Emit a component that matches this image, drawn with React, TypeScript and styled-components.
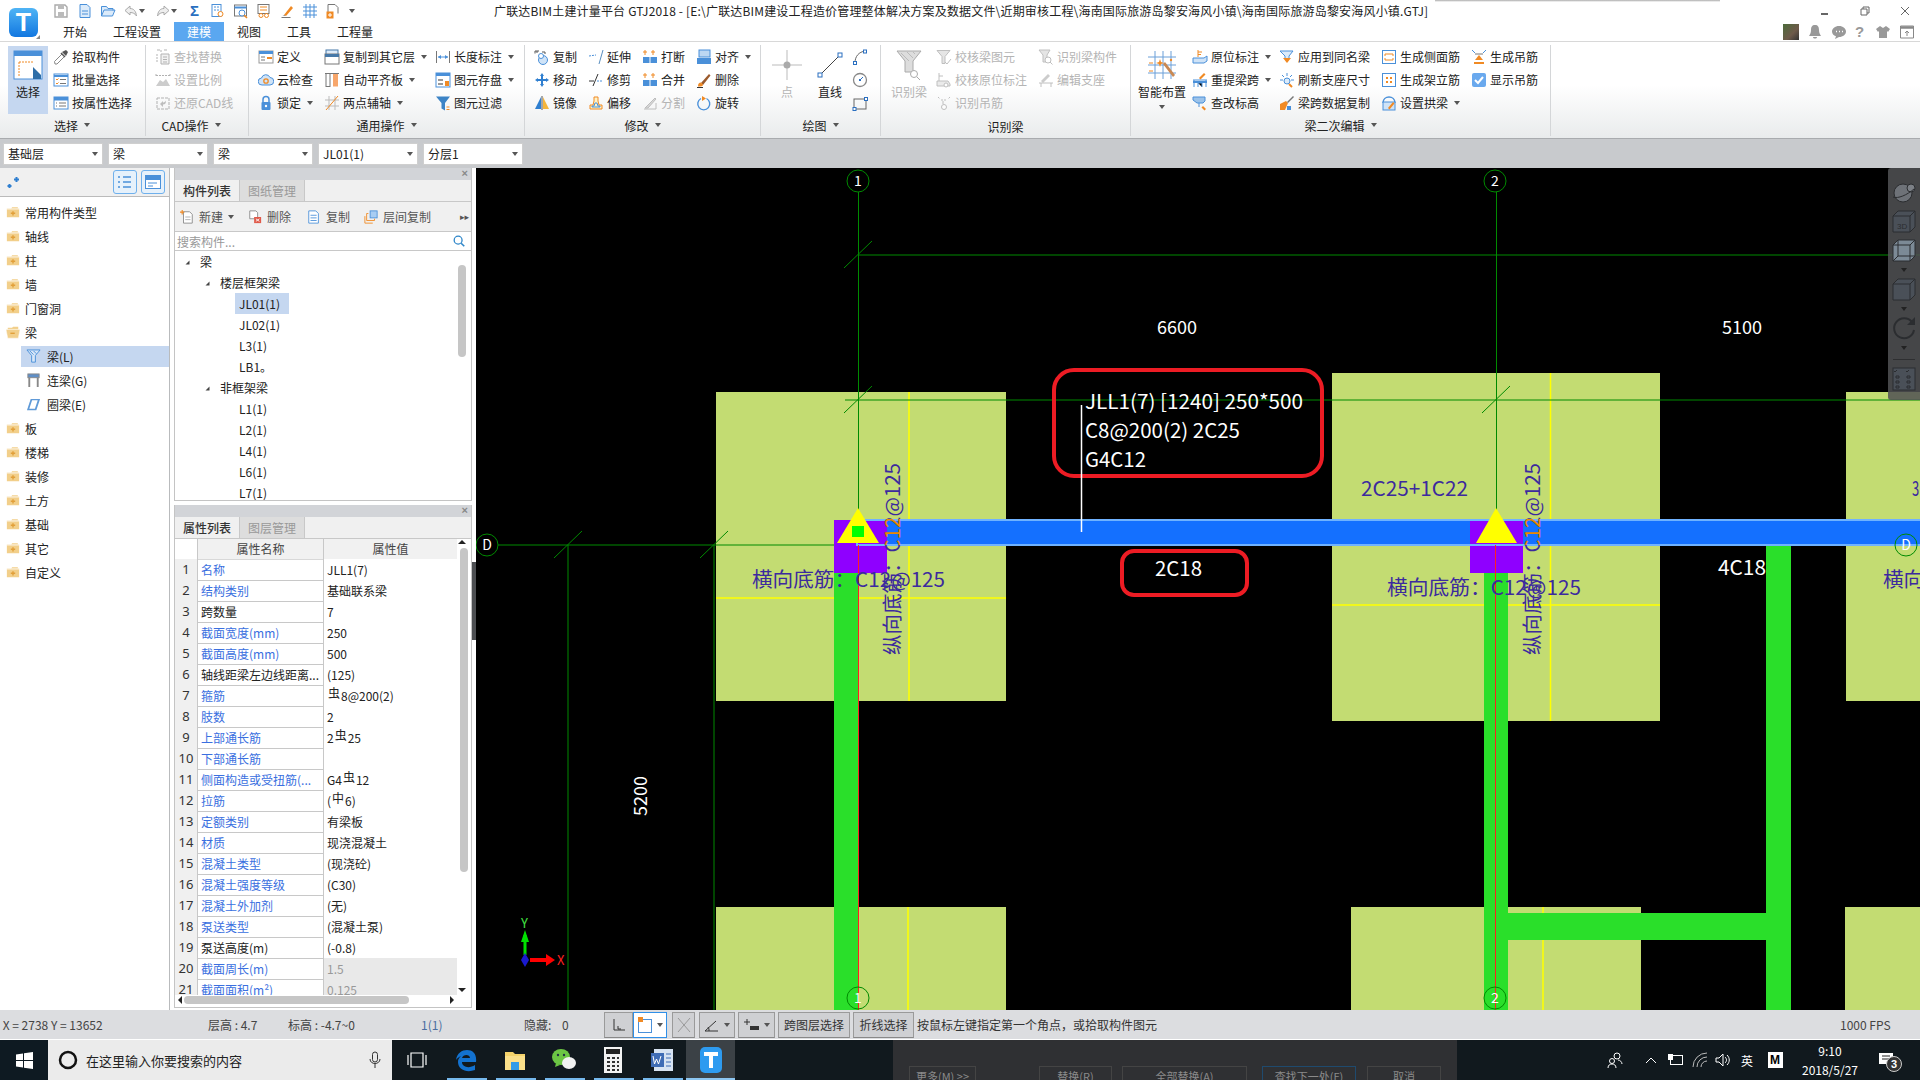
import React, { ReactNode } from "react";
import styled, { createGlobalStyle } from "styled-components";

const Global = createGlobalStyle`
  html, body { margin: 0; padding: 0; background: #000; }
  * { box-sizing: border-box; }
  #root { width: 1920px; height: 1080px; overflow: hidden; }
`;

const B = "#4a90d9";
const O = "#f08a24";
const G = "#777";
const paths: Record<string, ReactNode> = {
  save: <><path d="M2 2h10l2 2v10H2z" fill="none" stroke="#aaa" strokeWidth="1.4" /><path d="M5 2h6v4H5zM5 9h6v5H5z" fill="#bbb" /></>,
  doc: <><path d="M3 1.5h7l3 3v10H3z" fill="#dcebfa" stroke={B} /><path d="M5 8h6M5 11h6" stroke={B} /></>,
  open: <path d="M1.5 13V3.5h5l1.5 2h5v2M1.5 13l2.5-6h11l-2.5 6z" fill="#dcebfa" stroke={B} />,
  undo: <path d="M7 3L2 7.5 7 12V9.5c3 0 5 1 6.5 3.5C13 8.5 11 5.5 7 5.5z" fill="#eee" stroke="#aaa" />,
  redo: <path d="M9 3l5 4.5L9 12V9.5c-3 0-5 1-6.5 3.5C3 8.5 5 5.5 9 5.5z" fill="#eee" stroke="#aaa" />,
  q1: <><rect x="2" y="1.5" width="9" height="12" fill="#fff" stroke={B} /><path d="M4 4h2M7 4h2M4 7h2M7 7h2" stroke={B} /><circle cx="10.5" cy="11" r="2.5" fill="#fff" stroke={O} /></>,
  q2: <><rect x="1.5" y="2" width="12" height="11" fill="#fff" stroke={G} /><path d="M1.5 4.5h12" stroke={B} strokeWidth="2" /><circle cx="9" cy="10" r="3" fill="#fff" stroke={B} /><path d="M11 12l3 3" stroke={O} strokeWidth="1.5" /></>,
  q3: <><rect x="2" y="1.5" width="11" height="9" fill="#fff" stroke={G} /><path d="M4 4h7M4 7h7" stroke={O} /><circle cx="5" cy="12.5" r="2" fill="none" stroke={O} /><circle cx="10.5" cy="12.5" r="2" fill="none" stroke={O} /></>,
  q4: <><path d="M4 12l7-9 2 2-7 8z" fill={O} /><path d="M1.5 14.5h9" stroke={G} /><path d="M2.5 12.5l2-.5 1 1z" fill={G} /></>,
  q5: <path d="M4 1v14M8 1v14M12 1v14M1 4h14M1 8h14M1 12h14" stroke={B} fill="none" />,
  q6: <><path d="M3 1.5h7l3 3v6M3 1.5v8" fill="#fff" stroke={G} /><rect x="1.5" y="8.5" width="7" height="7" fill={O} /><path d="M5 10v4M3 12h4" stroke="#fff" /></>,
  sel: <><rect x="1" y="1" width="28" height="28" fill="#fff" stroke={B} /><rect x="1" y="1" width="28" height="5" fill={B} /><path d="M6 12h14M6 12v14" stroke={O} strokeDasharray="2 1" fill="none" /><path d="M20 17l8 8v4h-8z" fill="#2f6ea8" /></>,
  pick: <><path d="M2 15l-.5-2.5L9 5l2.500 2.500L4 15z" fill="#fff" stroke="#888" /><path d="M9 3l4-2 2 2-2 4z" fill="#555" /><path d="M8 4l4 4" stroke="#555" strokeWidth="1.500" /></>,
  batch: <><rect x="1" y="2" width="14" height="12" fill="#fff" stroke={B} /><path d="M1 4h14" stroke={B} strokeWidth="2" /><path d="M3 7l1 1 1.500-1.500M3 11l1 1 1.500-1.500" stroke={O} fill="none" /><path d="M7 7.500h6M7 11.500h6" stroke={G} /></>,
  attr: <><rect x="1" y="2" width="14" height="12" fill="#fff" stroke={B} /><rect x="1" y="2" width="14" height="3.500" fill={B} /><path d="M3 8h1M3 11h1M6 8h7M6 11h7" stroke={G} /></>,
  find: <><path d="M2 1h3M6 1v2M9 1h3" stroke="#999" /><path d="M6 5h8v10H6z" fill="#eee" stroke="#999" /><path d="M8 8h4M8 10.500h4M8 13h4" stroke="#999" /><path d="M2 5v9" stroke="#999" strokeDasharray="2 1" /></>,
  scale: <><path d="M1 2v3M15 2v3M1 3.500h14" stroke="#999" strokeDasharray="2 1" /><path d="M1 14l4-6 3 2 3-3 4 7z" fill="#bbb" /></>,
  restore: <><rect x="2" y="3" width="12" height="11" fill="none" stroke="#999" strokeDasharray="3 1" /><path d="M5 9l3 3V9.500c2 0 3-1 3-4-1 1.500-2 2-3 2V6z" fill="#aaa" /></>,
  define: <><rect x="1" y="2" width="14" height="12" fill="#fff" stroke="#999" /><rect x="1" y="2" width="14" height="3" fill={B} /><path d="M3 8h4M3 11h4" stroke={G} /><rect x="9" y="8" width="5" height="2" fill={O} /></>,
  cloud: <><path d="M4 13a3.500 3.500 0 0 1-.5-7A4.500 4.500 0 0 1 12 5.500a3.700 3.700 0 0 1 0 7.500z" fill="#cfe3f7" stroke={B} /><circle cx="8" cy="9" r="2.200" fill="none" stroke={O} strokeWidth="1.300" /></>,
  lock: <><path d="M5 7V4.500a3 3 0 0 1 6 0V7" fill="none" stroke={B} strokeWidth="1.500" /><rect x="3.500" y="7" width="9" height="8" rx="1" fill={B} /><circle cx="8" cy="11" r="1.200" fill="#fff" /></>,
  copyf: <><rect x="2" y="1" width="12" height="6" fill="#dcebfa" stroke="#4678a8" /><rect x="1" y="5" width="14" height="10" fill="#fff" stroke={G} /><rect x="1" y="5" width="14" height="3" fill="#4678a8" /></>,
  flush: <><rect x="2" y="1.500" width="4" height="13" fill="#fff" stroke={G} /><rect x="9" y="1.500" width="5" height="13" fill="#f7a66b" /><path d="M1 1.500h14" stroke={G} /></>,
  two: <><path d="M1 5h14M1 11h14M5 1v14M11 1v14" stroke="#bbb" /><path d="M2 15L14 1" stroke={O} /></>,
  len: <><path d="M1.500 2v12M14.500 2v12" stroke={G} /><path d="M3 8h10" stroke={B} /><path d="M3 8l3-2v4zM13 8l-3-2v4z" fill={B} /></>,
  store: <><rect x="1" y="1" width="14" height="14" fill="#fff" stroke={B} /><rect x="1" y="1" width="14" height="3" fill={B} /><rect x="3" y="7" width="5" height="2" fill="#999" /><rect x="3" y="11" width="5" height="2" fill="#999" /><rect x="10" y="9" width="4" height="5" fill={O} /></>,
  filter: <><path d="M1 1.500h14L10 8v7.500L6.500 13.500V8z" fill="#3d84c6" /><path d="M11.500 12h3M11.500 14.500h3" stroke={O} /></>,
  copy: <><path d="M2 3h2M8 3h3v2M1 4.500V2h4" stroke="#555" fill="none" /><circle cx="9" cy="11" r="4.500" fill="#cfe3f7" stroke={B} /><circle cx="7" cy="7" r="2.500" fill="#fff" stroke={B} /></>,
  move: <path d="M8 1l2 3H9v3h3V6l3 2-3 2V9H9v3h1l-2 3-2-3h1V9H4v1L1 8l3-2v1h3V4H6z" fill="#2f7fd0" />,
  mirror: <><path d="M7 2v12H1z" fill="#2f7fd0" /><path d="M9 2v12h6z" fill="#f5b53b" /><path d="M8 1v14" stroke="#555" /></>,
  extend: <><path d="M1 7l7-1" stroke={B} strokeDasharray="2 1" /><path d="M15 1l-4 14" stroke="#5a8fc0" /></>,
  trim: <><path d="M1 9h5" stroke="#333" /><path d="M9 9h6" stroke={B} strokeDasharray="2 1" /><path d="M10 2L5 14" stroke="#333" /></>,
  offset: <><path d="M2 14v-4h3l1-4V2h4v4l1 4h3v4z" fill="#fff3c7" stroke={O} /><path d="M4 12v-1h2l1-3h2l1 3h2v1z" fill="none" stroke={B} /></>,
  brk: <><path d="M3 1v5M1 3h4M11 1v5M9 3h4" stroke={O} /><rect x="1" y="8" width="6.500" height="6" fill={B} /><rect x="8.500" y="8" width="6.500" height="6" fill={B} /></>,
  split: <><path d="M2 14h12V8" stroke="#aaa" fill="none" /><path d="M3 13L13 3l1 1-8 9z" fill="#ccc" stroke="#aaa" /></>,
  align: <><rect x="3" y="1" width="11" height="7" fill="#bcd7f2" stroke={B} /><rect x="1" y="9" width="14" height="6" fill={B} /></>,
  del: <><path d="M5 11L13 2l1.500 1.500L7 13z" fill="#9b5a2c" /><path d="M2 14.500c0-3 1-4 3-4l2 2c0 2-2 2-5 2z" fill={O} /><path d="M1 15.500h6" stroke="#333" /></>,
  rot: <><path d="M10.500 3.500A6 6 0 1 1 5 3.500" fill="none" stroke={B} strokeWidth="1.400" /><path d="M6 1l4 2.500L6 6z" fill={O} /></>,
  point: <><path d="M15 0v30M0 15h30" stroke="#bbb" /><circle cx="15" cy="15" r="3.500" fill="#aaa" /></>,
  line: <><path d="M5 25L25 5" stroke="#444" /><rect x="3" y="23" width="4" height="4" fill="#fff" stroke="#2a6fc0" /><rect x="23" y="3" width="4" height="4" fill="#fff" stroke="#2a6fc0" /></>,
  arc: <><path d="M3 14C3 7 7 3 13 2" stroke="#666" fill="none" /><rect x="1.500" y="12.500" width="3" height="3" fill="#fff" stroke="#2a6fc0" /><rect x="11.500" y="1" width="3" height="3" fill="#fff" stroke="#2a6fc0" /></>,
  circ: <><circle cx="8" cy="8" r="6.500" fill="#fff" stroke="#888" strokeWidth="1.300" /><path d="M8 8l3-3" stroke="#2a6fc0" /><rect x="7" y="7" width="2" height="2" fill="#2a6fc0" /></>,
  rect: <><rect x="2" y="4" width="12" height="10" fill="none" stroke="#666" /><rect x="1" y="12.500" width="3" height="3" fill="#fff" stroke="#2a6fc0" /><rect x="12.500" y="2.500" width="3" height="3" fill="#fff" stroke="#2a6fc0" /></>,
  rbeam: <><path d="M3 1h24l-8 10v11h-8V11z" fill="#ddd" stroke="#aaa" /><path d="M7 3l8 8M13 2l6 6M19 2l2 2" stroke="#bbb" /><circle cx="20" cy="24" r="3.500" fill="#fff" stroke="#aaa" /><path d="M23 27l3 3" stroke="#aaa" /></>,
  ck1: <><path d="M1 1.500h13l-5 6v7H6v-7z" fill="#ddd" stroke="#aaa" /><path d="M9 13l2 2 4-5" fill="none" stroke="#aaa" /></>,
  ck2: <><path d="M3 1v8M3 4h4" stroke="#aaa" /><path d="M1 9h11l2 3v2H1z" fill="#e4e4e4" stroke="#aaa" /><circle cx="10" cy="13" r="2" fill="#fff" stroke="#aaa" /></>,
  hang: <><path d="M2 2l2 2M14 2l-2 2M5 5h6" stroke="#aaa" strokeDasharray="2 1" /><path d="M7 6v3" stroke="#aaa" /><circle cx="8" cy="12" r="2.500" fill="#fff" stroke="#aaa" /></>,
  ck3: <><path d="M1 1h11l-3 5v7H5V6z" fill="#ddd" stroke="#aaa" /><circle cx="10" cy="11" r="3" fill="#fff" stroke="#aaa" /><path d="M12 13l2.500 2.500" stroke="#aaa" /></>,
  edit: <><path d="M3 9l7-7 2 2-7 7z" fill="#bbb" /><path d="M1 11h14M3 11v4M13 11v4" stroke="#aaa" /></>,
  smart: <><path d="M8 1v28M16 1v28M24 1v28M1 7h28M1 15h28M1 23h28" stroke="#6a9fd8" /><path d="M2 13h4M2 21h4" stroke={O} /><path d="M16 14l10 13 2-2L18 12z" fill="#c98852" /><path d="M13 9l1 3 3 1-3 1-1 3-1-3-3-1 3-1z" fill={O} /><circle cx="24" cy="10" r="1.200" fill={O} /></>,
  orig: <><path d="M6 1v7M6 3h4M6 5.500h3" stroke={O} /><path d="M1 9h11l3-2v5l-3 2H1z" fill="#cfe3f7" stroke={B} /></>,
  lift: <><path d="M1 8h14M2 8v7M14 8v7M6 11h4v4M6 15v-4" stroke={B} /><path d="M1 10h14" stroke={B} strokeWidth="2" /><path d="M7 6l5-5 1.500 1.500-5 5z" fill={O} /></>,
  elev: <><path d="M1 2h12v4l-2 2H5L1 5z" fill="#9cc3ea" stroke={B} /><path d="M7 8v4" stroke={B} /><path d="M11 11l3 3-1.500 1.500-3-3z" fill={O} /></>,
  same: <><path d="M1 2h13l-4 5v3H6V7z" fill="#dcebfa" stroke={B} /><path d="M4 9h8l-4 5z" fill={O} /></>,
  fresh: <><path d="M8 1v3M3 3l2 2M13 3l-2 2M1 8h3M15 8h-3" stroke={B} /><circle cx="8" cy="9" r="3" fill="#dcebfa" stroke={B} /><path d="M10 12l3 3" stroke={O} strokeWidth="2" /></>,
  data: <><path d="M1 15V9l6-3 2 2-3 7z" fill={O} /><path d="M8 7l6-6 1 1-6 6z" fill="#777" /><path d="M8 15V11h4v4" fill={B} /></>,
  side: <><rect x="1.500" y="1.500" width="13" height="13" fill="#fff" stroke={B} /><path d="M4 5h8M4 11h8M4 5v2M12 5v2M4 9v2M12 9v2" stroke={O} /></>,
  erect: <><rect x="1.500" y="1.500" width="13" height="13" fill="#fff" stroke={B} /><rect x="5" y="5" width="2" height="2" fill={O} /><rect x="9" y="5" width="2" height="2" fill={O} /><rect x="5" y="9" width="2" height="2" fill={O} /><rect x="9" y="9" width="2" height="2" fill={O} /></>,
  arch: <><path d="M2 8c0-8 12-8 12 0" fill="none" stroke={B} strokeWidth="1.500" /><rect x="2" y="7" width="12" height="8" fill="#cfe3f7" stroke={B} /><path d="M7 13l5-6 1.500 1.500-5 6z" fill={O} /></>,
  hgen: <><path d="M1 1l3 3M15 1l-3 3" stroke={B} /><path d="M4 5h8" stroke={G} /><path d="M8 6l4 5H4z" fill={O} /><path d="M3 14h10" stroke={O} strokeWidth="2" /></>,
  check: <><rect x="1" y="1" width="14" height="14" rx="2" fill="#6aa9ee" /><path d="M4 8l3 3 5-6" fill="none" stroke="#fff" strokeWidth="2" /></>,
  fold: <><path d="M1 4h5l1-1.500h6.500V4H15v10H1z" fill="#f2cf8a" /><path d="M1 4.500h14" stroke="#fff" /><path d="M8 7v5M5.500 9.500h5" stroke="#e2a03a" strokeWidth="1.600" /></>,
  foldo: <><path d="M2 3h5l1-1h6v3H2z" fill="#f2cf8a" /><path d="M0 5h16l-2 10H2z" fill="#f2cf8a" stroke="#fff" strokeWidth=".5" /><path d="M5 9.500h5" stroke="#e2a03a" strokeWidth="1.600" /></>,
  nbeam: <><path d="M1 1h14l-5 6v7H6V7z" fill="#d6e6f8" stroke={B} /><path d="M4 2l4 4M8 2l3 3" stroke={B} /></>,
  conn: <><rect x="2" y="1" width="12" height="4" fill="#5f8fc7" stroke="#888" /><path d="M3.500 5v10M12.500 5v10" stroke="#888" strokeWidth="2" fill="none" /></>,
  ring: <path d="M5 2h10l-4 12H1zM6.500 3.500l-3 9h6l3-9z" fill="#5f9ad8" />,
  newf: <><path d="M4 2h7l3 3v10H4z" fill="#fff" stroke="#888" /><path d="M6 8h6M6 11h6" stroke="#aaa" /><path d="M2.500 0v5M0 2.500h5" stroke={O} strokeWidth="1.300" /></>,
  delf: <><path d="M2 1h7l2 2v7H2z" fill="#fff" stroke="#888" /><rect x="7" y="8" width="8" height="7" fill="#e05a4a" /><path d="M9 10l4 3M13 10l-4 3" stroke="#fff" /></>,
  copyd: <><path d="M2 1h8l3 3v11H2z" fill="#fff" stroke={B} /><path d="M4 6h7M4 9h7M4 12h7" stroke={B} /></>,
  floor: <><rect x="7" y="1" width="8" height="8" fill="#a8cdf3" stroke={B} /><path d="M5 4H3v8h9v-2M1 7v8h9" fill="none" stroke={O} /></>,
  tree: <path d="M1 13l8-8v8z" fill="#444" />,
  search: <><circle cx="7" cy="7" r="4.500" fill="none" stroke="#2e86c9" strokeWidth="1.500" /><path d="M10.500 10.500l3.500 3.500" stroke="#2e86c9" strokeWidth="1.800" /></>,
};

const Sv = styled.svg<{ $off?: boolean }>`
  flex: none;
  display: block;
  ${(p) => (p.$off ? "filter: grayscale(1); opacity: .75;" : "")}
`;
const Glyph = ({ name, size = 16, box = 16, off }: { name: string; size?: number; box?: number; off?: boolean }) => (
  <Sv width={size} height={size} viewBox={`0 0 ${box} ${box}`} $off={off}>{paths[name]}</Sv>
);

const Root = styled.div`
  width: 1920px;
  height: 1080px;
  display: flex;
  flex-direction: column;
  position: relative;
  overflow: hidden;
  font-family: "Noto Sans CJK SC", "Noto Sans", sans-serif;
  font-size: 12px;
  color: #222;
  background: #fff;
`;
const TopShadow = styled.div`
  position: absolute;
  left: 1435px;
  top: 0;
  width: 285px;
  height: 2px;
  background: linear-gradient(#aaa, #fff);
`;
const Head = styled.header`
  height: 42px;
  display: flex;
  background: #fff;
  border-bottom: 1px solid #d8d8d8;
  flex: none;
`;
const LogoZone = styled.div`
  width: 46px;
  padding: 8px 0 0 9px;
  flex: none;
  position: relative;
  &::after {
    content: "";
    position: absolute;
    left: 36px;
    top: 35px;
    border-left: 4px solid transparent;
    border-bottom: 4px solid #888;
  }
`;
const Logo = styled.div`
  width: 29px;
  height: 29px;
  border-radius: 6px;
  background: linear-gradient(#4fb4f5, #1277e0);
  color: #fff;
  font: bold 25px/29px "Liberation Sans", sans-serif;
  text-align: center;
`;
const HeadCol = styled.div`
  flex: 1;
  display: flex;
  flex-direction: column;
`;
const TitleRow = styled.div`
  height: 22px;
  display: flex;
  align-items: center;
  padding-left: 7px;
`;
const Qat = styled.div`
  width: 441px;
  display: flex;
  align-items: center;
  flex: none;
`;
const QatItem = styled.span<{ $w: number }>`
  width: ${(p) => p.$w}px;
  flex: none;
  display: flex;
  align-items: center;
  justify-content: flex-start;
  font: bold 15px/16px "Liberation Sans", sans-serif;
  color: #2a6fc0;
`;
const Title = styled.div`
  flex: 1;
  white-space: nowrap;
  font-size: 12px;
  line-height: 22px;
  letter-spacing: 0.18px;
`;
const WinCtl = styled.div`
  width: 100px;
  display: flex;
  align-items: center;
  justify-content: space-between;
  padding-right: 10px;
  color: #666;
`;
const TabRow = styled.div`
  height: 19px;
  display: flex;
  align-items: flex-end;
  padding-left: 4px;
`;
const Tab = styled.div<{ $w: number; $on?: boolean }>`
  width: ${(p) => p.$w}px;
  height: 19px;
  line-height: 19px;
  text-align: center;
  color: ${(p) => (p.$on ? "#fff" : "#222")};
  background: ${(p) => (p.$on ? "#5aa7f0" : "transparent")};
`;
const HeadRight = styled.div`
  margin-left: auto;
  display: flex;
  align-items: center;
  height: 19px;
  gap: 8px;
  padding-right: 5px;
`;
const Avatar = styled.div`
  width: 16px;
  height: 16px;
  background: linear-gradient(135deg, #4c6b3a, #6e5a4a 60%, #333);
`;
const Help = styled.span`
  font: bold 15px "Liberation Sans", sans-serif;
  color: #999;
  width: 12px;
`;

const Ribbon = styled.div`
  height: 97px;
  display: flex;
  padding: 3px 0 2px;
  background: linear-gradient(#fff 45%, #e9ebec);
  border-bottom: 1px solid #a9abae;
  flex: none;
`;
const Group = styled.section<{ $w: number }>`
  width: ${(p) => p.$w}px;
  border-right: 1px solid #d4d6d8;
  display: flex;
  flex-direction: column;
  flex: none;
`;
const GroupBody = styled.div<{ $pad: number }>`
  height: 70px;
  display: flex;
  padding-left: ${(p) => p.$pad}px;
`;
const GroupLabel = styled.div<{ $shift?: number; $low?: boolean }>`
  height: 22px;
  display: flex;
  align-items: center;
  justify-content: center;
  gap: 6px;
  padding-right: ${(p) => p.$shift || 0}px;
  padding-top: ${(p) => (p.$low ? 3 : 0)}px;
`;
const Caret = styled.i`
  display: inline-block;
  flex: none;
  width: 0;
  height: 0;
  border-left: 3.5px solid transparent;
  border-right: 3.5px solid transparent;
  border-top: 4px solid #555;
`;
const Col = styled.div<{ $w?: number; $m?: number }>`
  width: ${(p) => (p.$w ? `${p.$w}px` : "auto")};
  margin-left: ${(p) => p.$m || 0}px;
  flex: none;
  display: flex;
  flex-direction: column;
`;
const ToolRow = styled.div<{ $off?: boolean }>`
  height: 23px;
  display: flex;
  align-items: center;
  white-space: nowrap;
  color: ${(p) => (p.$off ? "#b4b4b4" : "#222")};
`;
const ToolIconBox = styled.span`
  width: 19px;
  flex: none;
`;
const ToolCaret = styled(Caret)`
  margin-left: 6px;
`;
const Big = styled.div<{ $w: number; $on?: boolean; $off?: boolean }>`
  width: ${(p) => p.$w}px;
  height: 68px;
  flex: none;
  display: flex;
  flex-direction: column;
  align-items: center;
  line-height: 18px;
  background: ${(p) => (p.$on ? "#c5d7f0" : "transparent")};
  color: ${(p) => (p.$off ? "#b4b4b4" : "#222")};
  margin-top: 1px;
  white-space: nowrap;
`;
const BigIcon = styled.div`
  height: 37px;
  display: flex;
  align-items: center;
`;
const BigCaret = styled.div`
  margin-top: 3px;
  line-height: 0;
`;
const DrawSmall = styled.div`
  display: flex;
  flex-direction: column;
  padding-left: 2px;
`;
const DrawCell = styled.div`
  height: 23px;
  display: flex;
  align-items: center;
`;

const Tool = ({ i, t, off, c }: { i: string; t: string; off?: boolean; c?: boolean }) => (
  <ToolRow $off={off}>
    <ToolIconBox><Glyph name={i} size={16} off={off} /></ToolIconBox>
    {t}
    {c && <ToolCaret />}
  </ToolRow>
);

const ComboBar = styled.div`
  height: 29px;
  background: #c8cacd;
  display: flex;
  align-items: center;
  gap: 5px;
  padding-left: 3px;
  flex: none;
`;
const Combo = styled.div`
  width: 100px;
  height: 22px;
  background: #fff;
  border: 1px solid #cfcfcf;
  display: flex;
  align-items: center;
  justify-content: space-between;
  padding: 0 4px;
`;

const Main = styled.main`
  height: 842px;
  display: flex;
  flex: none;
  background: #fff;
  position: relative;
`;
const Nav = styled.nav`
  width: 170px;
  border-right: 1px solid #b9bbbd;
  flex: none;
`;
const NavTop = styled.div`
  height: 29px;
  background: #f0f0f0;
  border-bottom: 1px solid #bbb;
  display: flex;
  align-items: center;
  padding: 0 4px 0 7px;
  gap: 4px;
`;
const NavBtn = styled.div`
  width: 24px;
  height: 24px;
  border: 1px solid #6fb0ec;
  border-radius: 3px;
  background: #e6f1fb;
  display: flex;
  align-items: center;
  justify-content: center;
`;
const NavSpacer = styled.div`
  flex: 1;
  line-height: 0;
`;
const NavList = styled.div`
  padding-top: 3px;
`;
const NavRow = styled.div<{ $sub?: boolean; $on?: boolean }>`
  height: 24px;
  display: flex;
  align-items: center;
  gap: ${(p) => (p.$sub ? 6 : 5)}px;
  margin-left: ${(p) => (p.$sub ? 21 : 0)}px;
  padding-left: ${(p) => (p.$sub ? 5 : 6)}px;
  position: relative;
  background: ${(p) => (p.$on ? "linear-gradient(transparent 2px, #c5d7f0 2px, #c5d7f0 23px, transparent 23px)" : "none")};
`;

const Mid = styled.div`
  width: 298px;
  margin-left: 4px;
  display: flex;
  flex-direction: column;
  gap: 4px;
  flex: none;
`;
const Pane = styled.section<{ $h: number }>`
  height: ${(p) => p.$h}px;
  border: 1px solid #c4c4c4;
  border-top: none;
  display: flex;
  flex-direction: column;
  overflow: hidden;
  flex: none;
  position: relative;
`;
const PaneTitle = styled.div`
  height: 12px;
  background: #d2d4d8;
  color: #888;
  font: bold 11px/11px "Liberation Sans", sans-serif;
  text-align: right;
  padding-right: 3px;
  flex: none;
`;
const PaneTabs = styled.div`
  height: 22px;
  background: #f0f0f0;
  display: flex;
  border-bottom: 1px solid #c8c8c8;
  flex: none;
`;
const PaneTab = styled.div<{ $on?: boolean }>`
  width: 65px;
  text-align: center;
  line-height: 21px;
  font-weight: ${(p) => (p.$on ? 500 : 400)};
  color: ${(p) => (p.$on ? "#333" : "#999")};
  background: ${(p) => (p.$on ? "#f0f0f0" : "#dddddd")};
  border-right: 1px solid #c8c8c8;
`;
const PaneTools = styled.div`
  height: 30px;
  background: #f0f0f0;
  border-bottom: 1px solid #c8c8c8;
  display: flex;
  align-items: center;
  padding-left: 5px;
  color: #555;
  white-space: nowrap;
  flex: none;
`;
const PaneTool = styled.span<{ $w: number }>`
  width: ${(p) => p.$w}px;
  display: flex;
  align-items: center;
  gap: 5px;
  flex: none;
`;
const More = styled.span`
  margin-left: auto;
  padding-right: 2px;
  font: 9px/10px "DejaVu Sans", sans-serif;
  color: #555;
`;
const Search = styled.div`
  height: 19px;
  border-bottom: 1px solid #c8c8c8;
  display: flex;
  align-items: center;
  justify-content: space-between;
  padding: 0 5px 0 2px;
  color: #999;
  flex: none;
`;
const Tree = styled.div`
  flex: 1;
  position: relative;
  overflow: hidden;
`;
const TreeRow = styled.div<{ $lv: number }>`
  height: 21px;
  display: flex;
  align-items: center;
  padding-left: ${(p) => [10, 30, 64][p.$lv]}px;
  gap: 7px;
`;
const TreeLabel = styled.span<{ $on?: boolean }>`
  padding: 0 ${(p) => (p.$on ? 9 : 0)}px 0 4px;
  margin-left: -4px;
  line-height: 21px;
  background: ${(p) => (p.$on ? "#c5d7f0" : "transparent")};
`;
const ScrollThumb = styled.div<{ $l: number; $t: number; $h: number }>`
  position: absolute;
  left: ${(p) => p.$l}px;
  top: ${(p) => p.$t}px;
  width: 8px;
  height: ${(p) => p.$h}px;
  background: #c6c6c6;
  border-radius: 4px;
`;
const Table = styled.div`
  height: 456px;
  width: 282px;
  overflow: hidden;
  flex: none;
`;
const RowGrid = styled.div`
  display: grid;
  grid-template-columns: 22px 126px 134px;
  height: 21px;
  line-height: 21px;
  white-space: nowrap;
`;
const HeadGrid = styled(RowGrid)`
  height: 20px;
  line-height: 20px;
  color: #444;
`;
const HCell = styled.div<{ $first?: boolean }>`
  background: ${(p) => (p.$first ? "#fff" : "#f1f1f1")};
  text-align: center;
  border-bottom: 1px solid #d8d8d8;
  border-left: ${(p) => (p.$first ? "none" : "1px solid #c8c8c8")};
`;
const NumCell = styled.div`
  background: #f0f0f0;
  border-bottom: 1px solid #c8c8c8;
  text-align: center;
  color: #333;
  font: 13px/21px "Noto Sans", sans-serif;
`;
const NameCell = styled.div<{ $blue?: boolean }>`
  border-left: 1px solid #c8c8c8;
  border-bottom: 1px solid #c8c8c8;
  padding-left: 3px;
  color: ${(p) => (p.$blue ? "#3a6fe0" : "#222")};
  overflow: hidden;
`;
const ValueCell = styled.div<{ $gray?: boolean }>`
  border-left: 1px solid #c8c8c8;
  border-bottom: 1px solid #c8c8c8;
  padding-left: 3px;
  color: ${(p) => (p.$gray ? "#999" : "#222")};
  background: ${(p) => (p.$gray ? "#e9e9e9" : "#fff")};
`;
const Rebar = styled.span`
  font-size: 12px;
  position: relative;
  top: -3px;
  padding: 0 1px;
`;
const VArrow = styled.div<{ $t: number; $up?: boolean }>`
  position: absolute;
  top: ${(p) => p.$t}px;
  left: 283px;
  width: 0;
  height: 0;
  border-left: 4px solid transparent;
  border-right: 4px solid transparent;
  ${(p) => (p.$up ? "border-bottom: 4px solid #222;" : "border-top: 4px solid #222;")}
`;
const HBar = styled.div`
  height: 10px;
  display: flex;
  align-items: center;
  width: 282px;
  padding: 0 3px;
  justify-content: space-between;
  position: relative;
  flex: none;
`;
const HThumb = styled.div`
  position: absolute;
  left: 9px;
  width: 225px;
  height: 8px;
  background: #c6c6c6;
  border-radius: 4px;
`;
const HArrow = styled.i<{ $r?: boolean }>`
  width: 0;
  height: 0;
  border-top: 4px solid transparent;
  border-bottom: 4px solid transparent;
  ${(p) => (p.$r ? "border-left: 4px solid #222;" : "border-right: 4px solid #222;")}
`;
const SplitTab = styled.div`
  position: absolute;
  left: 472px;
  top: 394px;
  width: 4px;
  height: 78px;
  background: #4d4f52;
`;

const CanvasBox = styled.div`
  width: 1444px;
  height: 842px;
  margin-left: 4px;
  background: #000;
  position: relative;
  overflow: hidden;
  flex: none;
`;
const ViewBar = styled.div`
  position: absolute;
  right: 0;
  top: 0;
  width: 32px;
  height: 232px;
  background: rgba(80, 82, 84, 0.86);
  border-radius: 3px 0 0 3px;
  display: flex;
  flex-direction: column;
  align-items: center;
  padding-top: 10px;
`;
const ViewCell = styled.div<{ $h: number }>`
  height: ${(p) => p.$h}px;
  display: flex;
  align-items: center;
`;
const ViewCaret = styled.div`
  height: 11px;
  display: flex;
  align-items: center;
`;
const ViewLine = styled.div`
  width: 22px;
  height: 1px;
  background: #2e2f31;
  margin: 6px 0 5px;
`;
const DarkCaret = styled(Caret)`
  border-top-color: #222;
`;

const Status = styled.footer`
  height: 30px;
  background: #dcdde0;
  border-bottom: 1px solid #fff;
  display: flex;
  align-items: center;
  color: #444;
  white-space: nowrap;
  flex: none;
`;
const Stat = styled.span<{ $x: number; $blue?: boolean }>`
  width: ${(p) => p.$x}px;
  flex: none;
  color: ${(p) => (p.$blue ? "#4a6ea0" : "#444")};
`;
const SBtn = styled.div<{ $w: number; $on?: boolean; $m?: number }>`
  width: ${(p) => p.$w}px;
  margin-left: ${(p) => p.$m || 0}px;
  height: 26px;
  flex: none;
  display: flex;
  align-items: center;
  justify-content: center;
  gap: 4px;
  border: 1px solid ${(p) => (p.$on ? "#2f8fe8" : "#9a9a9a")};
  border-bottom-color: ${(p) => (p.$on ? "#2f8fe8" : "#888")};
  background: ${(p) => (p.$on ? "#fff" : "#cfd0d3")};
  color: #333;
`;
const Hint = styled.span`
  margin-left: 3px;
  width: 923px;
  flex: none;
  color: #333;
`;

const Taskbar = styled.div`
  height: 40px;
  background: #11191e;
  display: flex;
  color: #fff;
  flex: none;
`;
const WinBtn = styled.div`
  width: 48px;
  display: flex;
  align-items: center;
  justify-content: center;
  background: #0e1a22;
`;
const SearchBox = styled.div`
  width: 344px;
  background: #ebebeb;
  color: #222;
  display: flex;
  align-items: center;
  font-size: 13px;
  padding: 0 11px 0 10px;
  gap: 8px;
`;
const MicBox = styled.span`
  margin-left: auto;
  line-height: 0;
`;
const TaskIcon = styled.div<{ $line?: boolean; $on?: boolean }>`
  width: 49px;
  position: relative;
  display: flex;
  align-items: center;
  justify-content: center;
  background: ${(p) => (p.$on ? "#3b4146" : "transparent")};
  ${(p) =>
    p.$line
      ? `&::after { content: ""; position: absolute; left: ${p.$on ? 0 : 6}px; right: ${p.$on ? 0 : 3}px; bottom: 0; height: 2px; background: ${p.$on ? "#8cc5f0" : "#76b9ed"}; }`
      : ""}
`;
const Ghost = styled.div`
  margin-left: 158px;
  width: 564px;
  background: #2f3033;
  display: flex;
  padding: 26px 0 0 16px;
  overflow: hidden;
  color: #8a8a8a;
  font-size: 11px;
  flex: none;
`;
const GhostBtn = styled.div<{ $w: number; $m?: number; $on?: boolean }>`
  width: ${(p) => p.$w}px;
  margin-left: ${(p) => p.$m || 0}px;
  height: 30px;
  flex: none;
  border: 1px solid ${(p) => (p.$on ? "#1f4a6e" : "#444")};
  text-align: center;
  line-height: 19px;
  white-space: nowrap;
`;
const Tray = styled.div`
  flex: 1;
  display: flex;
  align-items: center;
  padding-left: 146px;
  font-size: 12px;
`;
const TrayItem = styled.div<{ $m?: number }>`
  width: 24px;
  margin-left: ${(p) => p.$m || 0}px;
  display: flex;
  align-items: center;
  justify-content: center;
  flex: none;
`;
const MBox = styled.span`
  width: 15px;
  height: 16px;
  background: #fff;
  color: #000;
  font: bold 12px/16px "Liberation Sans", sans-serif;
  text-align: center;
`;
const Clock = styled.div`
  width: 72px;
  margin-left: 7px;
  text-align: center;
  line-height: 19px;
  flex: none;
`;
const Notif = styled.div`
  width: 40px;
  position: relative;
  height: 40px;
  display: flex;
  align-items: center;
  justify-content: center;
`;
const Badge = styled.span`
  position: absolute;
  right: 4px;
  bottom: 8px;
  width: 16px;
  height: 16px;
  border-radius: 50%;
  background: #333;
  border: 1px solid #ccc;
  color: #fff;
  font: bold 11px/14px "Liberation Sans", sans-serif;
  text-align: center;
`;

const navTop = ["常用构件类型", "轴线", "柱", "墙", "门窗洞"];
const navBottom = ["板", "楼梯", "装修", "土方", "基础", "其它", "自定义"];
const treeRows: [number, string, boolean?][] = [
  [0, "梁"], [1, "楼层框架梁"], [2, "JL01(1)", true], [2, "JL02(1)"], [2, "L3(1)"], [2, "LB1。"],
  [1, "非框架梁"], [2, "L1(1)"], [2, "L2(1)"], [2, "L4(1)"], [2, "L6(1)"], [2, "L7(1)"],
];
const R1 = <Rebar>虫</Rebar>;
const R2 = <Rebar>中</Rebar>;
const rows: [string, ReactNode, boolean, boolean?][] = [
  ["名称", "JLL1(7)", true],
  ["结构类别", "基础联系梁", true],
  ["跨数量", "7", false],
  ["截面宽度(mm)", "250", true],
  ["截面高度(mm)", "500", true],
  ["轴线距梁左边线距离...", "(125)", false],
  ["箍筋", <>{R1}8@200(2)</>, true],
  ["肢数", "2", true],
  ["上部通长筋", <>2{R1}25</>, true],
  ["下部通长筋", "", true],
  ["侧面构造或受扭筋(...", <>G4{R1}12</>, true],
  ["拉筋", <>({R2}6)</>, true],
  ["定额类别", "有梁板", true],
  ["材质", "现浇混凝土", true],
  ["混凝土类型", "(现浇砼)", true],
  ["混凝土强度等级", "(C30)", true],
  ["混凝土外加剂", "(无)", true],
  ["泵送类型", "(混凝土泵)", true],
  ["泵送高度(m)", "(-0.8)", false],
  ["截面周长(m)", "1.5", true, true],
  ["截面面积(m²)", "0.125", true, true],
];

const cap = "#c3dc72";
const pur = "#3c2a9e";
const grn = "#008a00";
const cadFont = '"Noto Sans CJK SC", sans-serif';

const AxisMark = ({ x, y, t, fill = "#fff" }: { x: number; y: number; t: string; fill?: string }) => (
  <g>
    <circle cx={x} cy={y} r={11} fill="none" stroke={grn} />
    <text x={x} y={y + 5} textAnchor="middle" fontSize="14" fill={fill} fontFamily={cadFont}>{t}</text>
  </g>
);
const Tick = ({ x, y }: { x: number; y: number }) => <path d={`M${x - 14} ${y + 13}L${x + 14} ${y - 14}`} stroke={grn} />;
const Cad = ({ x, y, w, t, fill = pur, size = 20 }: { x: number; y: number; w: number; t: string; fill?: string; size?: number }) => (
  <text x={x} y={y} textLength={w} lengthAdjust="spacingAndGlyphs" fontSize={size} fill={fill} fontFamily={cadFont}>{t}</text>
);

const Drawing = () => (
  <svg width="1444" height="842" viewBox="476 168 1444 842" style={{ display: "block" }}>
    <defs>
      <clipPath id="beamClip"><rect x="476" y="519" width="1444" height="26" /></clipPath>
    </defs>
    <rect x="716" y="392" width="290" height="309" fill={cap} />
    <rect x="1332" y="373" width="328" height="348" fill={cap} />
    <rect x="1846" y="392" width="80" height="309" fill={cap} />
    <rect x="716" y="907" width="290" height="103" fill={cap} />
    <rect x="1351" y="907" width="290" height="103" fill={cap} />
    <rect x="1845" y="907" width="80" height="103" fill={cap} />
    <path d="M909 392V701M716 598H1006M1550.500 373V721M1332 605H1660M908 907V1010M1543 907V1010" stroke="#ffff00" strokeWidth="1.500" fill="none" />
    <path d="M858.500 192V520M1496.500 192V520M858 255H1920M845 400H1920M498 545H834M568 545V1010M714 545V1010" stroke={grn} fill="none" />
    <Tick x={858} y={255} /><Tick x={858} y={400} /><Tick x={1496} y={400} /><Tick x={568} y={545} /><Tick x={714} y={545} />
    <rect x="834" y="573" width="24" height="437" fill="#2adf2a" />
    <rect x="1484" y="573" width="24" height="437" fill="#2adf2a" />
    <rect x="1766" y="545" width="25" height="465" fill="#2adf2a" />
    <rect x="1507" y="913" width="260" height="27" fill="#2adf2a" />
    <rect x="857" y="520" width="1070" height="25" fill="#1470ff" />
    <rect x="834" y="520" width="53" height="53" fill="#8f00ff" />
    <rect x="1470" y="520" width="53" height="53" fill="#8f00ff" />
    <rect x="857" y="520" width="1070" height="25" fill="none" stroke="#6fb2ff" strokeWidth="2" />
    <path d="M858 508l21 35h-42z" fill="#ffff00" />
    <path d="M1496 508l21 35h-41z" fill="#ffff00" />
    <rect x="852" y="526" width="12" height="11" fill="#00ff00" />
    <path d="M858.500 545V1010M1495.500 545V1010" stroke="#ff2020" fill="none" />
    <rect x="1054" y="370" width="268" height="106" rx="20" fill="none" stroke="#ed1c24" strokeWidth="4" />
    <rect x="1122" y="551" width="125" height="44" rx="12" fill="none" stroke="#ed1c24" strokeWidth="4" />
    <path d="M1081.500 405V532" stroke="#fff" strokeWidth="1.500" />
    <Cad x={1085} y={409} w={218} t="JLL1(7) [1240] 250*500" fill="#fff" />
    <Cad x={1085} y={438} w={155} t="C8@200(2) 2C25" fill="#fff" />
    <Cad x={1085} y={467} w={61} t="G4C12" fill="#fff" />
    <Cad x={1155} y={576} w={47} t="2C18" fill="#fff" />
    <Cad x={1361} y={496} w={107} t="2C25+1C22" />
    <Cad x={1718} y={575} w={48} t="4C18" fill="#fff" />
    <Cad x={1157} y={334} w={40} t="6600" fill="#fff" size={18} />
    <Cad x={1722} y={334} w={40} t="5100" fill="#fff" size={18} />
    <g transform="translate(647 816) rotate(-90)"><Cad x={0} y={0} w={40} t="5200" fill="#fff" size={18} /></g>
    <Cad x={752} y={587} w={193} t="横向底筋：C12@125" />
    <Cad x={1387} y={595} w={194} t="横向底筋：C12@125" />
    <Cad x={1883} y={587} w={193} t="横向底筋：C12@125" />
    <Cad x={1912} y={496} w={30} t="3C25" />
    <g transform="translate(900 655) rotate(-90)"><Cad x={0} y={0} w={192} t="纵向底筋：C12@125" /></g>
    <g transform="translate(1540 655) rotate(-90)"><Cad x={0} y={0} w={192} t="纵向底筋：C12@125" /></g>
    <g clipPath="url(#beamClip)">
      <g transform="translate(900 655) rotate(-90)"><Cad x={0} y={0} w={192} t="纵向底筋：C12@125" fill="#e88a00" /></g>
      <g transform="translate(1540 655) rotate(-90)"><Cad x={0} y={0} w={192} t="纵向底筋：C12@125" fill="#e88a00" /></g>
    </g>
    <AxisMark x={858} y={181} t="1" />
    <AxisMark x={1495} y={181} t="2" />
    <AxisMark x={858} y={998} t="1" />
    <AxisMark x={1495} y={998} t="2" />
    <AxisMark x={487} y={545} t="D" />
    <AxisMark x={1906} y={545} t="D" />
    <g fontFamily={cadFont}>
      <path d="M525 955V935" stroke="#00e000" strokeWidth="3" />
      <path d="M525 930l-4 12h8z" fill="#00e000" />
      <path d="M530 960h17" stroke="#ff0000" strokeWidth="4" />
      <path d="M555 960l-9-6v12z" fill="#ff0000" />
      <path d="M525 953l4 7-4 7-4-7z" fill="#1a1ad0" />
      <text x="521" y="928" fontSize="13" fill="#40e040">Y</text>
      <text x="557" y="965" fontSize="13" fill="#ff2020">X</text>
    </g>
  </svg>
);

const ViewIcon = ({ children }: { children: ReactNode }) => (
  <svg width="26" height="26" viewBox="0 0 26 26">{children}</svg>
);
const cubeS = { fill: "#4a5058", stroke: "#2b2d30" };

export default function App() {
  return (
    <Root>
      <Global />
      <TopShadow />
      <Head>
        <LogoZone><Logo>T</Logo></LogoZone>
        <HeadCol>
          <TitleRow>
            <Qat>
              <QatItem $w={24}><Glyph name="save" /></QatItem>
              <QatItem $w={23}><Glyph name="doc" /></QatItem>
              <QatItem $w={23}><Glyph name="open" /></QatItem>
              <QatItem $w={32}><Glyph name="undo" /><Caret /></QatItem>
              <QatItem $w={35}><Glyph name="redo" /><Caret /></QatItem>
              <QatItem $w={20}>Σ</QatItem>
              <QatItem $w={23}><Glyph name="q1" /></QatItem>
              <QatItem $w={23}><Glyph name="q2" /></QatItem>
              <QatItem $w={24}><Glyph name="q3" /></QatItem>
              <QatItem $w={22}><Glyph name="q4" /></QatItem>
              <QatItem $w={23}><Glyph name="q5" /></QatItem>
              <QatItem $w={24}><Glyph name="q6" /></QatItem>
              <QatItem $w={10}><Caret /></QatItem>
            </Qat>
            <Title>广联达BIM土建计量平台 GTJ2018 - [E:\广联达BIM建设工程造价管理整体解决方案及数据文件\近期审核工程\海南国际旅游岛黎安海风小镇\海南国际旅游岛黎安海风小镇.GTJ]</Title>
            <WinCtl>
              <svg width="10" height="10"><path d="M1 8h7" stroke="#666" strokeWidth="2" /></svg>
              <svg width="10" height="10"><path d="M3 3V1h6v6H7M1 3h6v6H1z" fill="none" stroke="#666" /></svg>
              <svg width="10" height="10"><path d="M1 1l8 8M9 1l-8 8" stroke="#666" /></svg>
            </WinCtl>
          </TitleRow>
          <TabRow>
            <Tab $w={50}>开始</Tab>
            <Tab $w={74}>工程设置</Tab>
            <Tab $w={50} $on>建模</Tab>
            <Tab $w={50}>视图</Tab>
            <Tab $w={50}>工具</Tab>
            <Tab $w={62}>工程量</Tab>
            <HeadRight>
              <Avatar />
              <svg width="16" height="16" viewBox="0 0 16 16"><path d="M8 1c3 0 4 2 4 5 0 3 1 4 2 6H2c1-2 2-3 2-6 0-3 1-5 4-5zM6 13h4c0 2-4 2-4 0z" fill="#999" /></svg>
              <svg width="16" height="16" viewBox="0 0 16 16"><path d="M8 2c4 0 7 2.500 7 5.500S12 13 8 13l-4 2 1-2.700C2.500 11.500 1 9.800 1 7.500 1 4.500 4 2 8 2z" fill="#999" /><path d="M5 7.500h1M8 7.500h1M11 7.500h1" stroke="#fff" strokeWidth="1.500" /></svg>
              <Help>?</Help>
              <svg width="16" height="16" viewBox="0 0 16 16"><path d="M5 2l3 2 3-2 4 3-2 3-1-1v7H4V7L3 8 1 5z" fill="#999" /></svg>
              <svg width="16" height="16" viewBox="0 0 16 16"><path d="M1.500 2h13v12h-13z" fill="#fff" stroke="#888" /><path d="M1.500 3.500h13" stroke="#888" strokeWidth="2.500" /><path d="M8 7v5M6 9l2-2 2 2" stroke="#888" fill="none" /></svg>
            </HeadRight>
          </TabRow>
        </HeadCol>
      </Head>

      <Ribbon>
        <Group $w={146}>
          <GroupBody $pad={8}>
            <Big $w={40} $on><BigIcon><Glyph name="sel" size={30} box={30} /></BigIcon>选择</Big>
            <Col $m={5}>
              <Tool i="pick" t="拾取构件" />
              <Tool i="batch" t="批量选择" />
              <Tool i="attr" t="按属性选择" />
            </Col>
          </GroupBody>
          <GroupLabel $shift={1}>选择<Caret /></GroupLabel>
        </Group>
        <Group $w={103}>
          <GroupBody $pad={9}>
            <Col>
              <Tool i="find" t="查找替换" off />
              <Tool i="scale" t="设置比例" off />
              <Tool i="restore" t="还原CAD线" off />
            </Col>
          </GroupBody>
          <GroupLabel $shift={12}>CAD操作<Caret /></GroupLabel>
        </Group>
        <Group $w={276}>
          <GroupBody $pad={9}>
            <Col $w={66}>
              <Tool i="define" t="定义" />
              <Tool i="cloud" t="云检查" />
              <Tool i="lock" t="锁定" c />
            </Col>
            <Col $w={111}>
              <Tool i="copyf" t="复制到其它层" c />
              <Tool i="flush" t="自动平齐板" c />
              <Tool i="two" t="两点辅轴" c />
            </Col>
            <Col>
              <Tool i="len" t="长度标注" c />
              <Tool i="store" t="图元存盘" c />
              <Tool i="filter" t="图元过滤" />
            </Col>
          </GroupBody>
          <GroupLabel>通用操作<Caret /></GroupLabel>
        </Group>
        <Group $w={236}>
          <GroupBody $pad={9}>
            <Col $w={54}>
              <Tool i="copy" t="复制" />
              <Tool i="move" t="移动" />
              <Tool i="mirror" t="镜像" />
            </Col>
            <Col $w={54}>
              <Tool i="extend" t="延伸" />
              <Tool i="trim" t="修剪" />
              <Tool i="offset" t="偏移" />
            </Col>
            <Col $w={54}>
              <Tool i="brk" t="打断" />
              <Tool i="brk" t="合并" />
              <Tool i="split" t="分割" off />
            </Col>
            <Col>
              <Tool i="align" t="对齐" c />
              <Tool i="del" t="删除" />
              <Tool i="rot" t="旋转" />
            </Col>
          </GroupBody>
          <GroupLabel>修改<Caret /></GroupLabel>
        </Group>
        <Group $w={120}>
          <GroupBody $pad={3}>
            <Big $w={46} $off><BigIcon><Glyph name="point" size={30} box={30} /></BigIcon>点</Big>
            <Big $w={40}><BigIcon><Glyph name="line" size={30} box={30} /></BigIcon>直线</Big>
            <DrawSmall>
              <DrawCell><Glyph name="arc" /></DrawCell>
              <DrawCell><Glyph name="circ" /></DrawCell>
              <DrawCell><Glyph name="rect" /></DrawCell>
            </DrawSmall>
          </GroupBody>
          <GroupLabel>绘图<Caret /></GroupLabel>
        </Group>
        <Group $w={250}>
          <GroupBody $pad={4}>
            <Big $w={48} $off><BigIcon><Glyph name="rbeam" size={30} box={30} /></BigIcon>识别梁</Big>
            <Col $w={102} $m={3}>
              <Tool i="ck1" t="校核梁图元" off />
              <Tool i="ck2" t="校核原位标注" off />
              <Tool i="hang" t="识别吊筋" off />
            </Col>
            <Col>
              <Tool i="ck3" t="识别梁构件" off />
              <Tool i="edit" t="编辑支座" off />
            </Col>
          </GroupBody>
          <GroupLabel $low>识别梁</GroupLabel>
        </Group>
        <Group $w={420}>
          <GroupBody $pad={3}>
            <Big $w={56}>
              <BigIcon><Glyph name="smart" size={30} box={30} /></BigIcon>智能布置
              <BigCaret><Caret /></BigCaret>
            </Big>
            <Col $w={87} $m={2}>
              <Tool i="orig" t="原位标注" c />
              <Tool i="lift" t="重提梁跨" c />
              <Tool i="elev" t="查改标高" />
            </Col>
            <Col $w={102}>
              <Tool i="same" t="应用到同名梁" />
              <Tool i="fresh" t="刷新支座尺寸" />
              <Tool i="data" t="梁跨数据复制" />
            </Col>
            <Col $w={90}>
              <Tool i="side" t="生成侧面筋" />
              <Tool i="erect" t="生成架立筋" />
              <Tool i="arch" t="设置拱梁" c />
            </Col>
            <Col>
              <Tool i="hgen" t="生成吊筋" />
              <Tool i="check" t="显示吊筋" />
            </Col>
          </GroupBody>
          <GroupLabel>梁二次编辑<Caret /></GroupLabel>
        </Group>
      </Ribbon>

      <ComboBar>
        {["基础层", "梁", "梁", "JL01(1)", "分层1"].map((t, i) => (
          <Combo key={i}>{t}<Caret /></Combo>
        ))}
      </ComboBar>

      <Main>
        <Nav>
          <NavTop>
            <NavSpacer>
              <svg width="14" height="12" viewBox="0 0 14 12"><path d="M2.500 8v4M.5 10h4M9.500 1v5M7 3.500h5" stroke="#2f7fd0" strokeWidth="2" /></svg>
            </NavSpacer>
            <NavBtn>
              <svg width="16" height="14" viewBox="0 0 16 14"><path d="M1 2h2M1 7h2M1 12h2M6 2h8M6 7h8M6 12h8" stroke={B} strokeWidth="1.300" /></svg>
            </NavBtn>
            <NavBtn>
              <svg width="16" height="14" viewBox="0 0 16 14"><rect x=".5" y=".5" width="15" height="13" fill="#fff" stroke={B} /><rect x="1" y="1" width="14" height="4" fill={B} /><path d="M3 8h9M3 11h5" stroke={B} /></svg>
            </NavBtn>
          </NavTop>
          <NavList>
            {navTop.map((t) => (
              <NavRow key={t}><Glyph name="fold" size={14} />{t}</NavRow>
            ))}
            <NavRow><Glyph name="foldo" size={14} />梁</NavRow>
            <NavRow $sub $on><Glyph name="nbeam" size={15} />梁(L)</NavRow>
            <NavRow $sub><Glyph name="conn" size={15} />连梁(G)</NavRow>
            <NavRow $sub><Glyph name="ring" size={15} />圈梁(E)</NavRow>
            {navBottom.map((t) => (
              <NavRow key={t}><Glyph name="fold" size={14} />{t}</NavRow>
            ))}
          </NavList>
        </Nav>

        <Mid>
          <Pane $h={333}>
            <PaneTitle>×</PaneTitle>
            <PaneTabs>
              <PaneTab $on>构件列表</PaneTab>
              <PaneTab>图纸管理</PaneTab>
            </PaneTabs>
            <PaneTools>
              <PaneTool $w={68}><Glyph name="newf" size={14} />新建<Caret /></PaneTool>
              <PaneTool $w={59}><Glyph name="delf" size={14} />删除</PaneTool>
              <PaneTool $w={57}><Glyph name="copyd" size={14} />复制</PaneTool>
              <PaneTool $w={80}><Glyph name="floor" size={14} />层间复制</PaneTool>
              <More>▸▸</More>
            </PaneTools>
            <Search>搜索构件...<Glyph name="search" size={14} /></Search>
            <Tree>
              {treeRows.map(([lv, t, on], i) => (
                <TreeRow key={i} $lv={lv}>
                  {lv < 2 && <Glyph name="tree" size={8} />}
                  <TreeLabel $on={on}>{t}</TreeLabel>
                </TreeRow>
              ))}
              <ScrollThumb $l={283} $t={14} $h={92} />
            </Tree>
          </Pane>
          <Pane $h={503}>
            <PaneTitle>×</PaneTitle>
            <PaneTabs>
              <PaneTab $on>属性列表</PaneTab>
              <PaneTab>图层管理</PaneTab>
            </PaneTabs>
            <Table>
              <HeadGrid>
                <HCell $first />
                <HCell>属性名称</HCell>
                <HCell>属性值</HCell>
              </HeadGrid>
              {rows.map(([n, v, blue, gray], i) => (
                <RowGrid key={i}>
                  <NumCell>{i + 1}</NumCell>
                  <NameCell $blue={blue}>{n}</NameCell>
                  <ValueCell $gray={gray}>{v}</ValueCell>
                </RowGrid>
              ))}
            </Table>
            <VArrow $t={35} $up />
            <VArrow $t={483} />
            <ScrollThumb $l={285} $t={43} $h={324} />
            <HBar>
              <HArrow />
              <HThumb />
              <HArrow $r />
            </HBar>
          </Pane>
        </Mid>
        <SplitTab />

        <CanvasBox>
          <Drawing />
          <ViewBar>
            <ViewCell $h={28}>
              <ViewIcon>
                <circle cx="12" cy="14" r="9" fill="#6e7278" stroke="#2b2d30" />
                <circle cx="20" cy="9" r="4" fill="#7c8086" stroke="#2b2d30" />
                <path d="M2 18c5 2 14-2 21-8" stroke="#2b2d30" fill="none" />
              </ViewIcon>
            </ViewCell>
            <ViewCell $h={30}>
              <ViewIcon>
                <path d="M2 8l5-5h17v16l-5 5H2z" {...cubeS} />
                <path d="M2 8h17v16M19 8l5-5" fill="none" stroke="#2b2d30" />
                <text x="6" y="21" fontSize="8" fill="#2b2d30" fontFamily="Liberation Sans">3D</text>
              </ViewIcon>
            </ViewCell>
            <ViewCell $h={28}>
              <ViewIcon>
                <path d="M2 8l5-5h17v16l-5 5H2z" fill="#7c8a96" stroke="#2b2d30" />
                <path d="M2 8h17v16M19 8l5-5M7 3v16h17M7 19l-5 5" fill="none" stroke="#2b2d30" />
              </ViewIcon>
            </ViewCell>
            <ViewCaret><DarkCaret /></ViewCaret>
            <ViewCell $h={28}>
              <ViewIcon>
                <path d="M2 8l5-5h17v16l-5 5H2z" {...cubeS} />
                <path d="M2 8h17v16M19 8l5-5" fill="none" stroke="#2b2d30" />
              </ViewIcon>
            </ViewCell>
            <ViewCaret><DarkCaret /></ViewCaret>
            <ViewCell $h={28}>
              <ViewIcon>
                <path d="M21 7a10 10 0 1 0 2 8" fill="none" stroke="#2b2d30" strokeWidth="2" />
                <path d="M24 2v8h-8z" fill="#2b2d30" />
              </ViewIcon>
            </ViewCell>
            <ViewCaret><DarkCaret /></ViewCaret>
            <ViewLine />
            <ViewCell $h={28}>
              <ViewIcon>
                <rect x="2" y="2" width="22" height="22" {...cubeS} />
                <path d="M3 5l1 1 2-2M15 5l1 1 2-2M5 10v2h3v-2zM5 15v2h3v-2zM5 20v2h3v-2zM16 10v2h3v-2zM16 15v2h3v-2zM16 20v2h3v-2z" fill="none" stroke="#2b2d30" />
              </ViewIcon>
            </ViewCell>
          </ViewBar>
        </CanvasBox>
      </Main>

      <Status>
        <Stat $x={208}>&nbsp;X = 2738 Y = 13652</Stat>
        <Stat $x={80}>层高 : 4.7</Stat>
        <Stat $x={133}>标高 : -4.7~0</Stat>
        <Stat $x={103} $blue>1(1)</Stat>
        <Stat $x={80}>隐藏:&nbsp;&nbsp;&nbsp;&nbsp;0</Stat>
        <SBtn $w={29}>
          <svg width="14" height="14"><path d="M2 1v11h11" stroke="#333" fill="none" /><path d="M6 8v3h3" stroke="#333" fill="none" /></svg>
        </SBtn>
        <SBtn $w={34} $on>
          <svg width="16" height="18"><rect x="1.500" y="3.500" width="13" height="13" fill="#fff" stroke="#4a90d9" /><rect x="1" y="1" width="5" height="5" fill="#f08a24" /></svg>
          <Caret />
        </SBtn>
        <SBtn $w={23} $m={5}>
          <svg width="14" height="16"><path d="M1 1l12 14M13 1L1 15" stroke="#999" /></svg>
        </SBtn>
        <SBtn $w={36} $m={4}>
          <svg width="16" height="14"><path d="M1 13h13M1 13L12 3M5 13a5 5 0 0 0-1-4" stroke="#333" fill="none" /></svg>
          <Caret />
        </SBtn>
        <SBtn $w={37} $m={3}>
          <svg width="16" height="14"><path d="M3 1v6M0 4h6" stroke="#333" /><rect x="6" y="8" width="9" height="4" fill="#333" /></svg>
          <Caret />
        </SBtn>
        <SBtn $w={72} $m={3}>跨图层选择</SBtn>
        <SBtn $w={61} $m={3}>折线选择</SBtn>
        <Hint>按鼠标左键指定第一个角点，或拾取构件图元</Hint>
        <span>1000 FPS</span>
      </Status>

      <Taskbar>
        <WinBtn>
          <svg width="17" height="17" viewBox="0 0 17 17"><path d="M0 2.500l7-1V8H0zM8 1.300L17 0v8H8zM0 9h7v6.500l-7-1zM8 9h9v8l-9-1.300z" fill="#fff" /></svg>
        </WinBtn>
        <SearchBox>
          <svg width="20" height="20" viewBox="0 0 20 20"><circle cx="10" cy="10" r="8" fill="none" stroke="#111" strokeWidth="2.500" /></svg>
          在这里输入你要搜索的内容
          <MicBox>
            <svg width="12" height="18" viewBox="0 0 12 18"><rect x="3.500" y="1" width="5" height="10" rx="2.500" fill="none" stroke="#333" /><path d="M1 8c0 6 10 6 10 0M6 13v4" fill="none" stroke="#333" /></svg>
          </MicBox>
        </SearchBox>
        <TaskIcon>
          <svg width="22" height="18" viewBox="0 0 22 18"><path d="M5 2h12v14H5zM2 4v10M20 4v10" fill="none" stroke="#fff" strokeWidth="1.200" /></svg>
        </TaskIcon>
        <TaskIcon $line>
          <svg width="24" height="24" viewBox="0 0 24 24"><path d="M2 12C3 5 8 2 13 2c6 0 10 4 9 12H8c0 5 7 7 13 3v5c-8 3-17 0-17-8 0-3 1-4 3-6-2 1-4 2-5 4zM8 10h8c0-4-7-4-8 0z" fill="#1372d0" /></svg>
        </TaskIcon>
        <TaskIcon $line>
          <svg width="22" height="22" viewBox="0 0 22 22"><path d="M1 3h8l2 2h10v16H1z" fill="#f5d36b" /><rect x="1" y="7" width="20" height="14" fill="#fbe08a" /><rect x="7" y="13" width="8" height="8" fill="#2f9be8" /></svg>
        </TaskIcon>
        <TaskIcon $line>
          <svg width="26" height="24" viewBox="0 0 26 24"><ellipse cx="10" cy="9" rx="9" ry="8" fill="#6cc644" /><path d="M5 15l-1 4 5-2z" fill="#6cc644" /><ellipse cx="18" cy="15" rx="7" ry="6" fill="#f2f2f2" /><circle cx="7" cy="7" r="1.200" fill="#234" /><circle cx="13" cy="7" r="1.200" fill="#234" /></svg>
        </TaskIcon>
        <TaskIcon $line>
          <svg width="18" height="26" viewBox="0 0 18 26"><rect width="18" height="26" fill="#f3f3f3" /><rect x="2" y="2" width="14" height="5" fill="#222" /><path d="M3 10h3v2H3zM8 10h3v2H8zM13 10h2v2h-2zM3 14h3v2H3zM8 14h3v2H8zM13 14h2v2h-2zM3 18h3v2H3zM8 18h3v2H8zM13 18h2v2h-2zM3 22h3v2H3zM8 22h3v2H8zM13 22h2v2h-2z" fill="#333" /></svg>
        </TaskIcon>
        <TaskIcon $line>
          <svg width="24" height="24" viewBox="0 0 24 24"><rect x="4" y="1" width="19" height="22" fill="#d7e3f2" /><rect x="1" y="5" width="13" height="14" fill="#3f6cb5" /><path d="M3 8l1.500 8 2-5 2 5L11 8" stroke="#fff" fill="none" /><path d="M16 6h5M16 10h5M16 14h5M16 18h5" stroke="#3f6cb5" /></svg>
        </TaskIcon>
        <TaskIcon $line $on>
          <svg width="24" height="28" viewBox="0 0 24 28"><rect x="1" y="1" width="22" height="26" rx="5" fill="#2e9bf0" /><path d="M5 6h14v4h-5v12h-4V10H5z" fill="#fff" /></svg>
        </TaskIcon>
        <Ghost>
          <GhostBtn $w={67}>更多(M) &gt;&gt;</GhostBtn>
          <GhostBtn $w={73} $m={63}>替换(R)</GhostBtn>
          <GhostBtn $w={125} $m={10}>全部替换(A)</GhostBtn>
          <GhostBtn $w={94} $m={15} $on>查找下一处(F)</GhostBtn>
          <GhostBtn $w={74} $m={11}>取消</GhostBtn>
        </Ghost>
        <Tray>
          <TrayItem>
            <svg width="18" height="18" viewBox="0 0 18 18"><circle cx="11" cy="5" r="3" fill="none" stroke="#fff" /><circle cx="6" cy="10" r="2.500" fill="none" stroke="#fff" /><path d="M2 17c0-3 2-4 4-4s4 1 4 4M12 9c2 0 4 2 4 4" fill="none" stroke="#fff" /></svg>
          </TrayItem>
          <TrayItem $m={12}><svg width="12" height="8"><path d="M1 7l5-5 5 5" fill="none" stroke="#fff" /></svg></TrayItem>
          <TrayItem>
            <svg width="16" height="14"><rect x="3.500" y="2.500" width="12" height="9" fill="none" stroke="#fff" /><rect x="1" y="1" width="5" height="6" fill="#fff" /></svg>
          </TrayItem>
          <TrayItem $m={1}>
            <svg width="16" height="16" viewBox="0 0 16 16"><path d="M1 15A14 14 0 0 1 15 1M5 15A10 10 0 0 1 15 5M9 15a6 6 0 0 1 6-6" fill="none" stroke="#bbb" /></svg>
          </TrayItem>
          <TrayItem $m={-1}>
            <svg width="16" height="16" viewBox="0 0 16 16"><path d="M1 6h3l4-4v12l-4-4H1z" fill="none" stroke="#fff" /><path d="M10 5c2 2 2 4 0 6M12 3c3 3 3 7 0 10" fill="none" stroke="#fff" /></svg>
          </TrayItem>
          <TrayItem>英</TrayItem>
          <TrayItem $m={4}><MBox>M</MBox></TrayItem>
          <Clock>9:10<br />2018/5/27</Clock>
          <Notif>
            <svg width="16" height="16" viewBox="0 0 16 16"><path d="M1 1h14v11H1z" fill="#fff" /><path d="M4 4h8M4 7h8" stroke="#222" /></svg>
            <Badge>3</Badge>
          </Notif>
        </Tray>
      </Taskbar>
    </Root>
  );
}
